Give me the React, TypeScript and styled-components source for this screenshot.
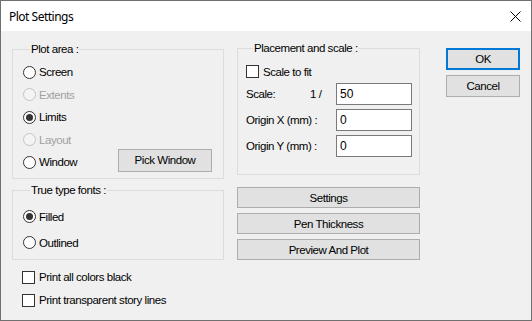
import styled, { createGlobalStyle } from "styled-components";

const GlobalStyle = createGlobalStyle`
  html, body {
    margin: 0;
    padding: 0;
    background: #ffffff;
  }
  * {
    box-sizing: border-box;
  }
`;

const Window = styled.div`
  width: 532px;
  height: 321px;
  border: 1px solid #707070;
  background: #f0f0f0;
  display: flex;
  flex-direction: column;
  font-family: "Liberation Sans", Arial, sans-serif;
  font-size: 11.5px;
  letter-spacing: -0.45px;
  color: #000;
  overflow: hidden;
`;

const TitleBar = styled.div`
  height: 30px;
  background: #ffffff;
  display: flex;
  align-items: center;
  justify-content: space-between;
  padding: 0 9px 0 8px;
  flex-shrink: 0;
`;

const Title = styled.span`
  font-family: "Noto Sans", "Open Sans", sans-serif;
  font-size: 12px;
  letter-spacing: -0.5px;
  margin-top: 1px;
`;

const CloseIcon = styled.svg`
  width: 11px;
  height: 11px;
  margin-right: 1px;
`;

const Client = styled.div`
  flex: 1;
  display: flex;
  padding: 11px 11px 0 11px;
`;

const LeftColumn = styled.div`
  width: 212px;
  display: flex;
  flex-direction: column;
  margin-top: 1px;
`;

const MiddleColumn = styled.div`
  width: 183px;
  margin-left: 13px;
  display: flex;
  flex-direction: column;
`;

const RightColumn = styled.div`
  width: 74px;
  margin-left: 26px;
  padding-top: 6px;
  display: flex;
  flex-direction: column;
  gap: 5px;
`;

const Group = styled.fieldset<{ $top?: number; $pad?: string }>`
  margin: ${(p) => p.$top ?? 0}px 0 0 0;
  padding: ${(p) => p.$pad ?? "0"};
  border: 1px solid #dcdcdc;
  min-width: 0;
  display: flex;
  flex-direction: column;
`;

const Legend = styled.legend`
  padding: 0 1px;
  margin-left: 7px;
  line-height: 13px;
  height: 13px;
`;

const RadioRow = styled.label<{ $h: number }>`
  height: ${(p) => p.$h}px;
  display: flex;
  align-items: center;
  justify-content: space-between;
`;

const RadioLabel = styled.span<{ $disabled?: boolean }>`
  display: flex;
  align-items: center;
  gap: 3px;
  color: ${(p) => (p.$disabled ? "#a0a0a0" : "#000")};
`;

const RadioCircle = styled.span<{ $checked?: boolean; $disabled?: boolean }>`
  width: 13px;
  height: 13px;
  border-radius: 50%;
  border: 1px solid ${(p) => (p.$disabled ? "#c4c4c4" : "#333333")};
  background: ${(p) => (p.$disabled ? "#f4f4f4" : "#ffffff")};
  display: flex;
  align-items: center;
  justify-content: center;
  flex-shrink: 0;

  &::after {
    content: "";
    width: 7px;
    height: 7px;
    border-radius: 50%;
    background: #333333;
    display: ${(p) => (p.$checked ? "block" : "none")};
  }
`;

const CheckRow = styled.label<{ $h: number }>`
  height: ${(p) => p.$h}px;
  display: flex;
  align-items: center;
  gap: 4px;
`;

const CheckBox = styled.span`
  width: 13px;
  height: 13px;
  border: 1px solid #333333;
  background: #ffffff;
  flex-shrink: 0;
`;

const Button = styled.button<{ $default?: boolean; $h?: number }>`
  height: ${(p) => p.$h ?? 22}px;
  background: #e1e1e1;
  border: ${(p) => (p.$default ? "2px solid #0078d7" : "1px solid #adadad")};
  font-family: inherit;
  font-size: 11.5px;
  letter-spacing: -0.45px;
  color: #000;
  padding: 0;
  border-radius: 0;
`;

const PickButton = styled(Button)`
  width: 94px;
  margin-bottom: 4px;
  margin-right: 11px;
`;

const FieldRow = styled.div`
  display: grid;
  grid-template-columns: 64px 1fr 76px;
  align-items: center;
  height: 22px;
`;

const FieldLabel = styled.span<{ $span?: number }>`
  grid-column: span ${(p) => p.$span ?? 1};
`;

const Input = styled.div`
  height: 22px;
  background: #ffffff;
  border: 1px solid #7a7a7a;
  padding: 0 3px;
  display: flex;
  align-items: center;
  font-size: 12px;
  letter-spacing: 0;
`;

const Fields = styled.div`
  display: flex;
  flex-direction: column;
  gap: 4px;
  margin-top: 1px;
`;

const ActionButtons = styled.div`
  display: flex;
  flex-direction: column;
  gap: 5px;
  margin-top: 12px;
`;

const Checks = styled.div`
  margin-top: 6px;
  padding-left: 10px;
`;

type RadioProps = { label: string; checked?: boolean; disabled?: boolean };

const Radio = ({ label, checked, disabled }: RadioProps) => (
  <RadioLabel $disabled={disabled}>
    <RadioCircle $checked={checked} $disabled={disabled} />
    {label}
  </RadioLabel>
);

export default function App() {
  return (
    <>
      <GlobalStyle />
      <Window>
        <TitleBar>
          <Title>Plot Settings</Title>
          <CloseIcon viewBox="0 0 11 11">
            <path d="M0.5 0.5 L10.5 10.5 M10.5 0.5 L0.5 10.5" stroke="#000" strokeWidth="1" fill="none" />
          </CloseIcon>
        </TitleBar>
        <Client>
          <LeftColumn>
            <Group $pad="5px 0 4px 10px">
              <Legend>Plot area :</Legend>
              <RadioRow $h={22.5}><Radio label="Screen" /></RadioRow>
              <RadioRow $h={22.5}><Radio label="Extents" disabled /></RadioRow>
              <RadioRow $h={22.5}><Radio label="Limits" checked /></RadioRow>
              <RadioRow $h={22.5}><Radio label="Layout" disabled /></RadioRow>
              <RadioRow $h={22.5}>
                <Radio label="Window" />
                <PickButton $h={23}>Pick Window</PickButton>
              </RadioRow>
            </Group>
            <Group $top={5} $pad="7px 0 3px 10px">
              <Legend>True type fonts :</Legend>
              <RadioRow $h={26}><Radio label="Filled" checked /></RadioRow>
              <RadioRow $h={26}><Radio label="Outlined" /></RadioRow>
            </Group>
            <Checks>
              <CheckRow $h={23}><CheckBox />Print all colors black</CheckRow>
              <CheckRow $h={23}><CheckBox />Print transparent story lines</CheckRow>
            </Checks>
          </LeftColumn>
          <MiddleColumn>
            <Group $pad="6px 7px 17px 8px">
              <Legend>Placement and scale :</Legend>
              <CheckRow $h={21}><CheckBox />Scale to fit</CheckRow>
              <Fields>
                <FieldRow>
                  <FieldLabel>Scale:</FieldLabel>
                  <FieldLabel>1 /</FieldLabel>
                  <Input>50</Input>
                </FieldRow>
                <FieldRow>
                  <FieldLabel $span={2}>Origin X (mm) :</FieldLabel>
                  <Input>0</Input>
                </FieldRow>
                <FieldRow>
                  <FieldLabel $span={2}>Origin Y (mm) :</FieldLabel>
                  <Input>0</Input>
                </FieldRow>
              </Fields>
            </Group>
            <ActionButtons>
              <Button $h={21}>Settings</Button>
              <Button $h={21}>Pen Thickness</Button>
              <Button $h={21}>Preview And Plot</Button>
            </ActionButtons>
          </MiddleColumn>
          <RightColumn>
            <Button $default>OK</Button>
            <Button>Cancel</Button>
          </RightColumn>
        </Client>
      </Window>
    </>
  );
}
